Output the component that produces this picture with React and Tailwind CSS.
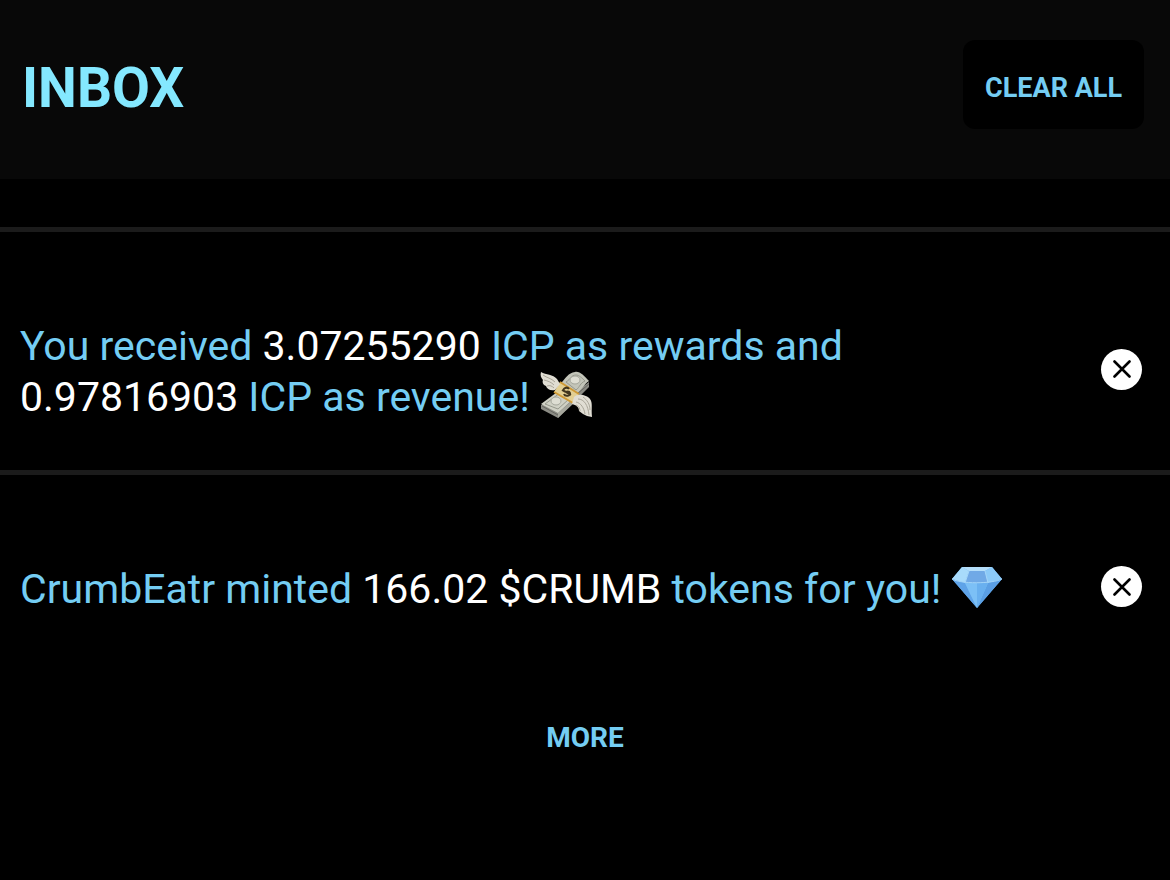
const MoneyWings = () => (
  <svg
    viewBox="0 0 54 48"
    className="-mt-2 mb-0.5 inline-block h-12 w-[54px] align-middle"
    role="img"
    aria-label="money with wings"
  >
    <path d="M1 34 L1 38 L18 47 L49 16 L49 11 L30 25z" fill="#8b8b84" />
    <path d="M1 33 L20 19 L33 28 L18 42z" fill="#cfd0c4" />
    <path d="M21 12 C26 7 28 2 35 1 C40 0 44 5 49 10 C44 13 42 19 36 23z" fill="#c3c5b9" />
    <path d="M18 42 L18 47 L34 32 L34 28z" fill="#a5a69c" />
    <path d="M2 35 L18 44 M37 23 L49 13" stroke="#66665f" strokeWidth="1" fill="none" />
    <path d="M5 33 L20 22 L29 28 L18 38z" fill="none" stroke="#96988c" strokeWidth="1" />
    <path d="M26 11 C31 8 31 4 36 4 C39 4 42 7 45 10 C40 12 40 16 36 19z" fill="none" stroke="#96988c" strokeWidth="1" />
    <ellipse cx="16" cy="30" rx="5" ry="4" fill="#deded3" stroke="#a5a79c" />
    <ellipse cx="35" cy="9" rx="5" ry="4" fill="#deded3" stroke="#a5a79c" />
    <path d="M20 11 L39 23 L33 32 L14 21z" fill="#e2cf93" />
    <path d="M20 11 L39 23 M14 21 L33 32" stroke="#cf9a35" strokeWidth="2" fill="none" />
    <path
      d="M29 18 C27 15 22 18 24 20 C26 22 29 19 30 22 C31 25 25 26 24 23 M22 19 L31 24"
      stroke="#40351d"
      strokeWidth="2"
      fill="none"
    />
    <path d="M1 1 C6 4 13 3 17 8 L20 13 L15 19 C10 20 7 18 6 15 C3 14 2 11 3 9 C1 7 0 4 1 1z" fill="#e0ddd3" />
    <path d="M3 4 C7 7 11 7 15 11 M4 9 C8 10 11 11 14 14 M7 15 C10 14 12 15 14 17" stroke="#a9a598" strokeWidth="1" fill="none" />
    <path d="M34 26 C38 22 47 24 50 28 C53 32 51 37 52 46 L47 45 L43 43 L39 40 C39 36 36 34 32 33z" fill="#e0ddd3" />
    <path d="M38 28 C44 28 48 34 49 44 M36 31 C41 32 44 37 45 43 M36 34 C39 35 40 38 40 40 M43 26 C47 29 50 33 50 39" stroke="#a9a598" strokeWidth="1" fill="none" />
  </svg>
);

const Diamond = () => (
  <svg
    viewBox="0 0 50 42"
    className="-mt-2 mb-0.5 inline-block h-[42px] w-[50px] align-middle"
    role="img"
    aria-label="gem stone"
  >
    <path d="M10 1 L40 1 L50 13 L25 42 L0 13z" fill="#6bb5f2" />
    <path d="M10 1 L17 5 L13 17 L0 13z" fill="#a8dbfb" />
    <path d="M17 5 L33 5 L36 17 L13 17z" fill="#70a9e6" />
    <path d="M10 1 L40 1 L33 5 L17 5z" fill="#b4defa" />
    <path d="M40 1 L50 13 L36 17 L33 5z" fill="#8ccaf8" />
    <path d="M0 13 L13 17 L25 42z" fill="#5fa3e8" />
    <path d="M13 17 L36 17 L25 42z" fill="#7cc0f6" />
    <path d="M36 17 L50 13 L25 42z" fill="#5b9fe4" />
    <path d="M25 17 L36 17 L25 42z" fill="#69b0ef" />
    <path d="M0 13 C8 18 40 18 50 13 M17 5 L13 17 M33 5 L36 17" stroke="#a4d5f8" strokeWidth="1" fill="none" />
  </svg>
);

const Notification = ({ children }) => {
  return (
    <li className="flex items-center justify-between border-t-5 border-[#1b1b1b] pt-[89px] pr-7 pb-[47px] pl-5">
      <p className="max-w-[1000px] text-[41px] leading-[51px] text-[#74cdf3]">
        {children}
      </p>
      <button
        type="button"
        aria-label="Dismiss"
        className="mb-1.5 flex size-[41px] shrink-0 items-center justify-center rounded-full bg-white text-black"
      >
        <svg viewBox="0 0 18 18" className="size-[18px]" aria-hidden="true">
          <path
            d="M1.5 1.5 L16.5 16.5 M16.5 1.5 L1.5 16.5"
            stroke="currentColor"
            strokeWidth="2.6"
            strokeLinecap="round"
          />
        </svg>
      </button>
    </li>
  );
};

const Amount = ({ children }) => <span className="text-white">{children}</span>;

export default function App() {
  return (
    <div className="min-h-screen bg-black font-['Roboto',sans-serif]">
      <header className="flex items-center justify-between bg-[#080808] pt-10 pr-[26px] pb-[50px] pl-[22px]">
        <h1 className="pt-2 text-[55px] leading-[81px] font-bold text-[#84e8ff]">
          INBOX
        </h1>
        <button
          type="button"
          className="h-[89px] rounded-xl bg-black px-[22px] pt-2 text-[27px] font-bold text-[#74cdf3]"
        >
          CLEAR ALL
        </button>
      </header>
      <main className="pt-12">
        <ul>
          <Notification>
            You received <Amount>3.07255290</Amount> ICP as rewards and
            <br />
            <Amount>0.97816903</Amount> ICP as revenue! <MoneyWings />
          </Notification>
          <Notification>
            CrumbEatr minted <Amount>166.02 $CRUMB</Amount> tokens for you!{" "}
            <Diamond />
          </Notification>
        </ul>
        <div className="flex justify-center pt-12">
          <button
            type="button"
            className="px-5 py-2 text-[28px] leading-10 font-bold text-[#74cdf3]"
          >
            MORE
          </button>
        </div>
      </main>
    </div>
  );
}
